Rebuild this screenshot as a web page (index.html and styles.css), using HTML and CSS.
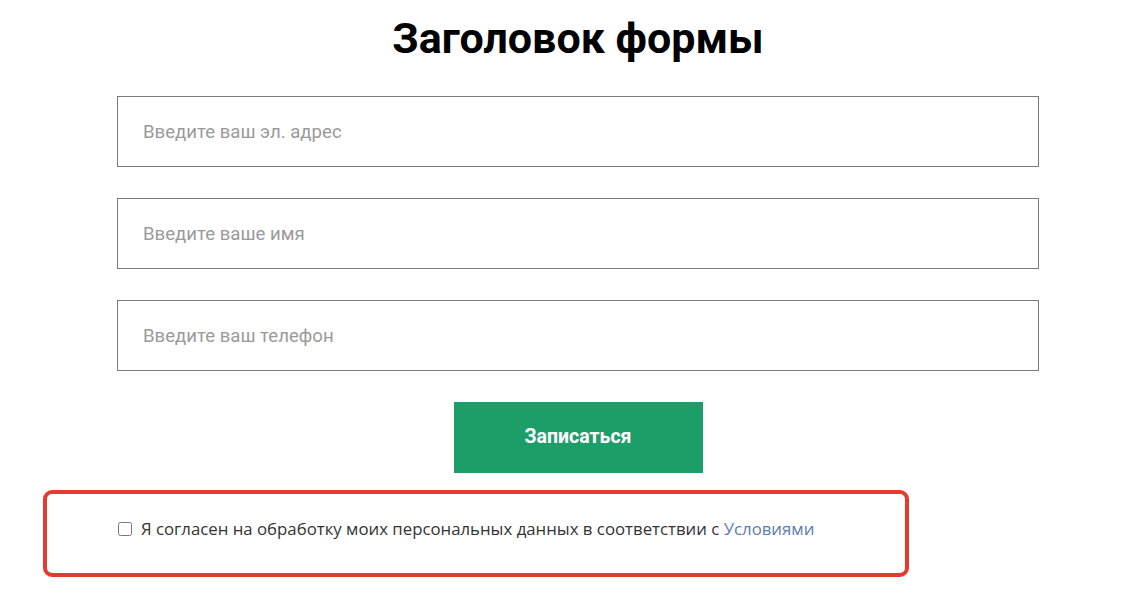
FILE: index.html
```html
<!DOCTYPE html>
<html lang="ru">
<head>
<meta charset="utf-8">
<link rel="stylesheet" href="styles.css">
</head>
<body>
<div class="page">
  <form class="form">
    <h1 class="title">Заголовок формы</h1>
    <input class="field" type="text" placeholder="Введите ваш эл. адрес">
    <input class="field" type="text" placeholder="Введите ваше имя">
    <input class="field" type="text" placeholder="Введите ваш телефон">
    <button class="submit" type="button">Записаться</button>
    <div class="consent-wrap">
      <label class="consent">
        <input class="check" type="checkbox">
        <span>Я согласен на обработку моих персональных данных в соответствии с <a class="link" href="#">Условиями</a></span>
      </label>
    </div>
  </form>
</div>
</body>
</html>
```

FILE: styles.css
```css
* { box-sizing: border-box; }
html, body { margin: 0; padding: 0; background: #fff; }
.page {
  padding-left: 117px;
  width: 1135px;
}
.form {
  width: 922px;
  display: flex;
  flex-direction: column;
  align-items: stretch;
}
.title {
  margin: 13px 0 0;
  height: 83px;
  font-family: Roboto, sans-serif;
  font-weight: 700;
  font-size: 43px;
  line-height: 50px;
  text-align: center;
  color: #000;
}
.field {
  height: 71px;
  margin: 0 0 31px;
  border: 1px solid #7a7a7a;
  border-radius: 0;
  padding: 0 25px;
  font-family: Roboto, sans-serif;
  font-size: 18.6px;
  color: #333;
  outline: none;
}
.field::placeholder { color: #9a9a9a; }
.submit {
  align-self: center;
  width: 249px;
  height: 71px;
  border: none;
  background: #1c9e69;
  color: #fff;
  font-family: Roboto, sans-serif;
  font-weight: 700;
  font-size: 19.5px;
  padding: 0 0 2px;
  cursor: pointer;
}
.consent-wrap {
  margin: 17px 0 0 -74px;
  width: 866px;
  height: 87px;
  border: 4px solid #e53b2f;
  border-radius: 9px;
  display: flex;
  align-items: center;
  padding: 0 0 10px 71px;
}
.consent {
  display: flex;
  align-items: center;
  gap: 9px;
  font-family: "Open Sans", sans-serif;
  font-size: 16.8px;
  color: #333;
}
.check {
  margin: 0;
  width: 14px;
  height: 14px;
}
.link { color: #5b7db0; text-decoration: none; }
```
